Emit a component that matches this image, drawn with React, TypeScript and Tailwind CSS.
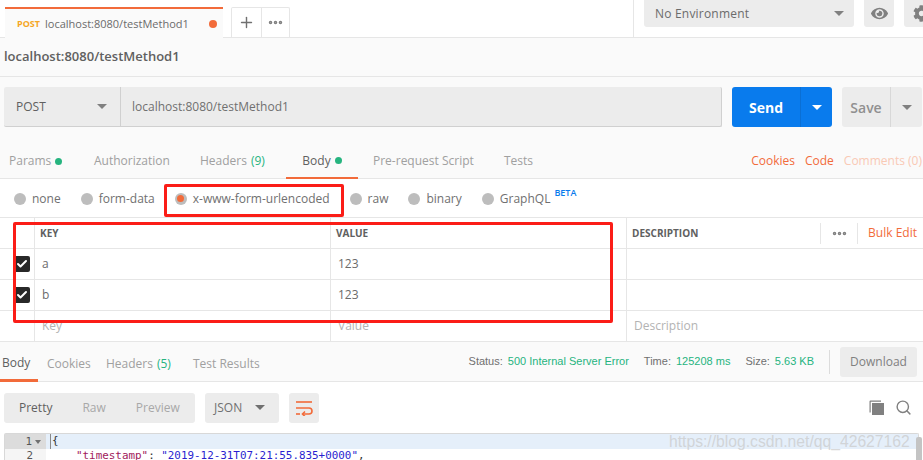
import { Plus, MoreHorizontal, Search, Check } from 'lucide-react';
import { FaEye, FaCog } from 'react-icons/fa';

function Caret({ className = 'border-t-[#808080]' }: { className?: string }) {
  return <span className={`w-0 h-0 border-x-[5px] border-x-transparent border-t-[5px] ${className}`} />;
}

function Dot() {
  return <span className="w-[7px] h-[7px] rounded-full bg-[#26b47f] inline-block" />;
}

function Radio({ label, active }: { label: string; active?: boolean }) {
  return (
    <div className="flex items-center gap-[6px]">
      <span className="w-3 h-3 rounded-full bg-[#bdbdbd] flex items-center justify-center">
        {active && <span className="w-[7px] h-[7px] rounded-full bg-[#f26b3a]" />}
      </span>
      <span className="text-[12px] text-[#707070]">{label}</span>
    </div>
  );
}

function Row({ k, v, d, checked, placeholder }: { k: string; v: string; d?: string; checked?: boolean; placeholder?: boolean }) {
  const color = placeholder ? 'text-[#b3b3b3]' : 'text-[#6b6b6b]';
  return (
    <div className="flex h-[31px] border-b border-[#e6e6e6] text-[12px]">
      <div className="w-[35px] border-r border-[#e6e6e6] flex items-center pl-[14px]">
        {checked && (
          <span className="w-[16px] h-[16px] rounded-[2px] bg-[#282828] flex items-center justify-center">
            <Check size={12} strokeWidth={4} className="text-white" />
          </span>
        )}
      </div>
      <div className={`w-[296px] border-r border-[#e6e6e6] flex items-center pl-[7px] ${color}`}>{k}</div>
      <div className={`w-[296px] border-r border-[#e6e6e6] flex items-center pl-[7px] ${color}`}>{v}</div>
      <div className="flex-1 flex items-center pl-[7px] text-[#b3b3b3]">{d}</div>
    </div>
  );
}

export default function App() {
  return (
    <div className="relative w-[923px] h-[460px] overflow-hidden bg-white font-['Open_Sans',sans-serif]">
      {/* top tab bar */}
      <div className="h-[38px] flex items-end border-b border-[#e6e6e6] pl-[5px]">
        <div className="shrink-0 w-[218px] h-[31px] bg-[#fafafa] border-t-2 border-[#f26b3a] flex items-center pl-[12px] pr-[5px] pt-[1px] mb-[-1px]">
          <span className="text-[9px] font-bold text-[#f5a623] mr-[5px]">POST</span>
          <span className="text-[11px] text-[#6b6b6b]">localhost:8080/testMethod1</span>
          <span className="ml-auto w-2 h-2 rounded-full bg-[#f26b3a] mr-[1px]" />
        </div>
        <div className="shrink-0 ml-2 h-[30px] w-[59px] flex border border-b-0 border-[#e6e6e6] rounded-t-[2px]">
          <div className="w-[30px] border-r border-[#e6e6e6] flex items-center justify-center">
            <Plus size={17} strokeWidth={2} className="text-[#707070]" />
          </div>
          <div className="flex-1 flex items-center justify-center">
            <MoreHorizontal size={17} strokeWidth={3} className="text-[#808080]" />
          </div>
        </div>
        <div className="shrink-0 ml-[343px] self-stretch flex border-l border-[#e6e6e6] pl-[10px]">
          <div className="w-[210px] h-[27px] bg-[#ececec] rounded-b-[3px] flex items-center pl-[11px] pr-[10px]">
            <span className="text-[12px] text-[#6b6b6b] tracking-[0.2px]">No Environment</span>
            <Caret className="ml-auto border-t-[#808080]" />
          </div>
          <div className="ml-[10px] w-[30px] h-[27px] bg-[#ececec] rounded-b-[3px] flex items-center justify-center">
            <FaEye size={17} className="text-[#808080]" />
          </div>
          <div className="ml-[10px] w-[30px] h-[27px] bg-[#ececec] rounded-b-[3px] flex items-center justify-center pl-[5px]">
            <FaCog size={17} className="shrink-0 text-[#808080]" />
          </div>
        </div>
      </div>

      {/* request name */}
      <div className="h-[39px] bg-[#fafafa] border-b border-[#e6e6e6] flex items-center pl-[4px] text-[13px] font-semibold text-[#606060]">
        localhost:8080/testMethod1
      </div>

      {/* url bar */}
      <div className="h-[63px] bg-[#fafafa] flex items-start pt-[10px] pl-[4px]">
        <div className="shrink-0 flex w-[718px] h-[40px] bg-[#ececec] border-b border-r border-[#d0d0d0] rounded-[2px]">
          <div className="w-[117px] border-r border-[#d0d0d0] flex items-center pl-[12px] pr-[13px] text-[12px] text-[#606060]">
            POST
            <Caret className="ml-auto border-t-[#808080]" />
          </div>
          <div className="flex-1 flex items-center pl-[11px] text-[12px] text-[#707070]">localhost:8080/testMethod1</div>
        </div>
        <div className="shrink-0 ml-[10px] flex w-[100px] h-[40px] bg-[#097bed] rounded-[3px]">
          <div className="w-[69px] flex items-center justify-center text-[14px] font-bold text-white border-r border-[#0a6fd4]">Send</div>
          <div className="flex-1 flex items-center justify-center">
            <Caret className="border-t-white" />
          </div>
        </div>
        <div className="shrink-0 ml-[10px] flex w-[80px] h-[40px] bg-[#ececec] rounded-[3px]">
          <div className="w-[49px] flex items-center justify-center text-[14px] font-semibold text-[#909090] border-r border-[#d8d8d8]">Save</div>
          <div className="flex-1 flex items-center justify-center">
            <Caret className="border-t-[#808080]" />
          </div>
        </div>
      </div>

      {/* request tabs */}
      <div className="h-[39px] pt-[4px] bg-[#fafafa] border-b border-[#e6e6e6] flex items-stretch text-[12px] text-[#a0a0a0]">
        <div className="w-[94px] flex items-center gap-[4px] pl-[9px]">Params <Dot /></div>
        <div className="w-[106px] flex items-center">Authorization</div>
        <div className="w-[86px] flex items-center gap-[4px]">Headers <span className="text-[#26b47f]">(9)</span></div>
        <div className="w-[72px] flex items-center justify-center gap-[4px] text-[#606060] border-b-2 border-[#f26b3a] mb-[-1px]">Body <Dot /></div>
        <div className="ml-[15px] w-[131px] flex items-center">Pre-request Script</div>
        <div className="flex items-center">Tests</div>
        <div className="ml-auto flex items-center gap-[10px] pr-[1px] text-[#f26b3a]">
          <span>Cookies</span>
          <span>Code</span>
          <span className="text-[#f9c9b5]">Comments (0)</span>
        </div>
      </div>

      {/* body type */}
      <div className="h-[39px] flex items-center pl-[14px] pt-[1px] border-b border-[#e6e6e6]">
        <Radio label="none" />
        <div className="ml-[20px]"><Radio label="form-data" /></div>
        <div className="ml-[20px]"><Radio label="x-www-form-urlencoded" active /></div>
        <div className="ml-[20px]"><Radio label="raw" /></div>
        <div className="ml-[20px]"><Radio label="binary" /></div>
        <div className="ml-[20px]"><Radio label="GraphQL" /></div>
        <span className="ml-[4px] mb-[11px] text-[9px] font-semibold text-[#097bed]">BETA</span>
      </div>

      {/* table */}
      <div className="flex h-[31px] border-b border-[#e6e6e6] text-[10px] font-bold text-[#606060]">
        <div className="w-[35px] border-r border-[#e6e6e6]" />
        <div className="w-[296px] border-r border-[#e6e6e6] flex items-center pl-[5px]">KEY</div>
        <div className="w-[296px] border-r border-[#e6e6e6] flex items-center pl-[5px]">VALUE</div>
        <div className="flex-1 flex items-center pl-[5px]">
          DESCRIPTION
          <div className="ml-auto flex items-center h-[21px] border-l border-[#e6e6e6] w-[37px] justify-center">
            <MoreHorizontal size={17} strokeWidth={3} className="text-[#808080]" />
          </div>
          <div className="flex items-center h-[21px] border-l border-[#e6e6e6] pl-[10px] pr-[6px] text-[12px] font-normal text-[#f26b3a]">Bulk Edit</div>
        </div>
      </div>
      <Row k="a" v="123" checked />
      <Row k="b" v="123" checked />
      <Row k="Key" v="Value" d="Description" placeholder />

      {/* response bar */}
      <div className="h-[40px] pt-[5px] bg-[#fafafa] border-b border-[#e6e6e6] flex items-stretch text-[12px] text-[#a0a0a0]">
        <div className="w-[38px] flex items-center pl-[2px] text-[#606060] border-b-[3px] border-[#f26b3a] mb-[-1px]">Body</div>
        <div className="ml-[9px] w-[59px] flex items-center">Cookies</div>
        <div className="w-[87px] flex items-center gap-[4px]">Headers <span className="text-[#26b47f]">(5)</span></div>
        <div className="flex items-center">Test Results</div>
        <div className="ml-auto -mt-[5px] flex items-center text-[11px] font-['Liberation_Sans',sans-serif] text-[#707070]">
          <span>Status:</span>
          <span className="ml-[5px] text-[#26b47f]">500 Internal Server Error</span>
          <span className="ml-[15px]">Time:</span>
          <span className="ml-[5px] text-[#26b47f]">125208 ms</span>
          <span className="ml-[15px]">Size:</span>
          <span className="ml-[5px] text-[#26b47f]">5.63 KB</span>
          <span className="ml-[15px] h-[24px] border-l border-[#dcdcdc]" />
          <div className="ml-[10px] mr-[6px] w-[77px] h-[30px] bg-[#ececec] rounded-[3px] flex items-center justify-center text-[12px] font-['Open_Sans',sans-serif] text-[#808080]">Download</div>
        </div>
      </div>

      {/* format toolbar */}
      <div className="h-[51px] flex items-center pl-[4px] pr-[11px]">
        <div className="w-[191px] h-[30px] bg-[#ececec] rounded-[3px] flex items-center text-[12px] text-[#a8a8a8]">
          <span className="ml-[15px] text-[#606060]">Pretty</span>
          <span className="ml-[30px]">Raw</span>
          <span className="ml-[30px]">Preview</span>
        </div>
        <div className="ml-[10px] w-[74px] h-[30px] bg-[#ececec] rounded-[3px] flex items-center pl-[9px] pr-[14px] text-[12px] text-[#707070]">
          JSON
          <Caret className="ml-auto border-t-[#707070]" />
        </div>
        <div className="ml-[10px] w-[30px] h-[30px] bg-[#ececec] rounded-[3px] flex items-center justify-center">
          <svg width="18" height="16" viewBox="0 0 18 16" fill="none" stroke="#f26b3a" strokeWidth="1.6">
            <path d="M1 2h16" />
            <path d="M1 8h13a2.500 2.500 0 0 1 0 6H8" />
            <path d="M1 14h4" />
            <path d="M10 11.500 7.500 14l2.500 2.500" />
          </svg>
        </div>
        <div className="ml-auto flex items-center gap-[11px]">
          <svg width="15" height="15" viewBox="0 0 15 15" fill="#808080">
            <path d="M0.500 1.500A1 1 0 0 1 1.500 0.500H12v1.200H1.700V12.500H0.500z" />
            <path d="M3 3h12v12H3z" />
          </svg>
          <Search size={17} strokeWidth={2} className="text-[#808080]" />
        </div>
      </div>

      {/* code editor */}
      <div className="mx-[4px] border-t border-x border-[#d8d8d8] font-['DejaVu_Sans_Mono',monospace] text-[10.900px] leading-[14px] rounded-t-[2px]">
        <div className="flex h-[15px] bg-[#e5effa]">
          <div className="w-[41px] bg-[#dcdcdc] flex items-center justify-end gap-[3px] pr-[5px] text-[#555]">
            1 <span className="w-0 h-0 border-x-[3px] border-x-transparent border-t-[4px] border-t-[#707070]" />
          </div>
          <div className="ml-[4px] pl-[1px] border-l border-[#888] text-[#333]">{'{'}</div>
        </div>
        <div className="flex">
          <div className="w-[41px] bg-[#f5f5f5] text-right pr-[13px] text-[#555]">2</div>
          <div className="pl-[30px] whitespace-pre">
            <span className="text-[#a11a5b]">"timestamp"</span>
            <span className="text-[#333]">: </span>
            <span className="text-[#2a1fd0]">"2019-12-31T07:21:55.835+0000"</span>
            <span className="text-[#333]">,</span>
          </div>
        </div>
      </div>

      {/* scrollbar */}
      <div className="absolute right-[1px] top-[437px] w-[6px] h-[23px] bg-[#c4c4c4] rounded-t-[2px]" />

      {/* red annotations */}
      <div className="absolute left-[164px] top-[184px] w-[180px] h-[33px] border-[3px] border-[#fb1d17] rounded-[2px]" />
      <div className="absolute left-[13px] top-[222px] w-[600px] h-[101px] border-[3px] border-[#fb1d17] rounded-[2px]" />

      {/* watermark */}
      <div className="absolute left-[669px] top-[430px] text-[15.700px] font-['Liberation_Sans',sans-serif] text-[#c8c8c8]/70 whitespace-nowrap">
        https://blog.csdn.net/qq_42627162
      </div>
    </div>
  );
}
